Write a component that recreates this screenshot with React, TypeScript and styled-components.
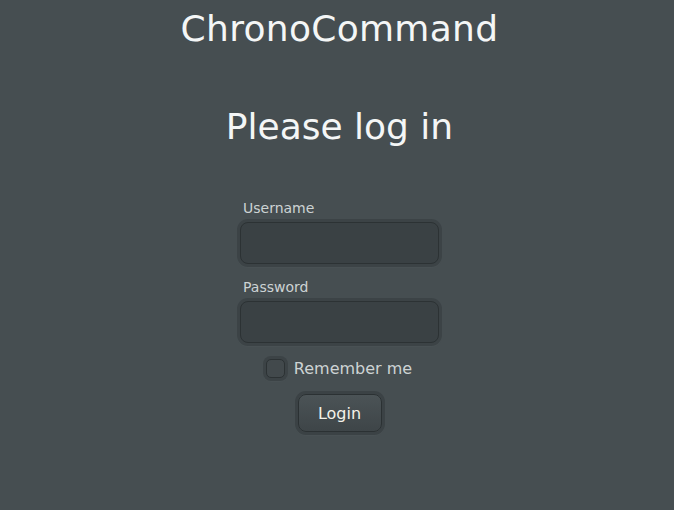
import React from "react";
import styled, { createGlobalStyle } from "styled-components";

const Global = createGlobalStyle`
  html, body { margin: 0; padding: 0; background: #464e51; }
  body { font-family: "DejaVu Sans", Verdana, sans-serif; }
`;

const Page = styled.div`
  min-height: 510px;
  display: flex;
  flex-direction: column;
  align-items: center;
  background: #464e51;
  color: #f4f6f6;
  padding: 8px 0 0 5px;
  box-sizing: border-box;
`;

const Title = styled.h1`
  font-size: 36px;
  font-weight: normal;
  margin: 0;
  line-height: 42px;
  letter-spacing: 0.3px;
`;

const Heading = styled.h2`
  font-size: 36px;
  font-weight: normal;
  margin: 56px 0 0;
  line-height: 42px;
`;

const Form = styled.form`
  width: 205px;
  display: flex;
  flex-direction: column;
  align-items: stretch;
  margin-top: 52px;
`;

const Label = styled.label`
  font-size: 14px;
  color: #cdd3d4;
  padding-left: 6px;
  line-height: 17px;
  margin-bottom: 2px;
`;

const Field = styled.input<{ $gap?: number }>`
  box-sizing: border-box;
  height: 42px;
  margin: 3px 3px ${(p) => 3 + (p.$gap ?? 0)}px;
  border: 1px solid #2c3234;
  border-radius: 8px;
  background: #3a4144;
  box-shadow: 0 0 0 3px #3c4346, 0 1px 0 3px #495154;
  outline: none;
  color: #eee;
  font: inherit;
  padding: 0 8px;
`;

const CheckRow = styled.label`
  display: flex;
  align-items: center;
  justify-content: center;
  gap: 6px;
  margin-top: 10px;
  padding-right: 4px;
  font-size: 16px;
  color: #cdd3d4;
`;

const Box = styled.span`
  box-sizing: border-box;
  width: 19px;
  height: 19px;
  margin: 3px;
  border: 1px solid #2c3234;
  border-radius: 5px;
  background: #42494c;
  box-shadow: 0 0 0 3px #3c4346, 0 1px 0 3px #495154;
`;

const ButtonRow = styled.div`
  display: flex;
  justify-content: center;
  margin-top: 10px;
`;

const Button = styled.button`
  box-sizing: border-box;
  width: 84px;
  height: 38px;
  margin: 3px;
  border: 1px solid #2b3133;
  border-radius: 8px;
  background: linear-gradient(#4b5356, #3e4548);
  box-shadow: 0 0 0 3px #3b4245, 0 1px 0 3px #495154;
  color: #f4f2ea;
  font: inherit;
  font-size: 16px;
`;

export default function App() {
  return (
    <Page>
      <Global />
      <Title>ChronoCommand</Title>
      <Heading>Please log in</Heading>
      <Form onSubmit={(e) => e.preventDefault()}>
        <Label>Username</Label>
        <Field $gap={12} />
        <Label>Password</Label>
        <Field type="password" />
        <CheckRow>
          <Box />
          Remember me
        </CheckRow>
        <ButtonRow>
          <Button>Login</Button>
        </ButtonRow>
      </Form>
    </Page>
  );
}
